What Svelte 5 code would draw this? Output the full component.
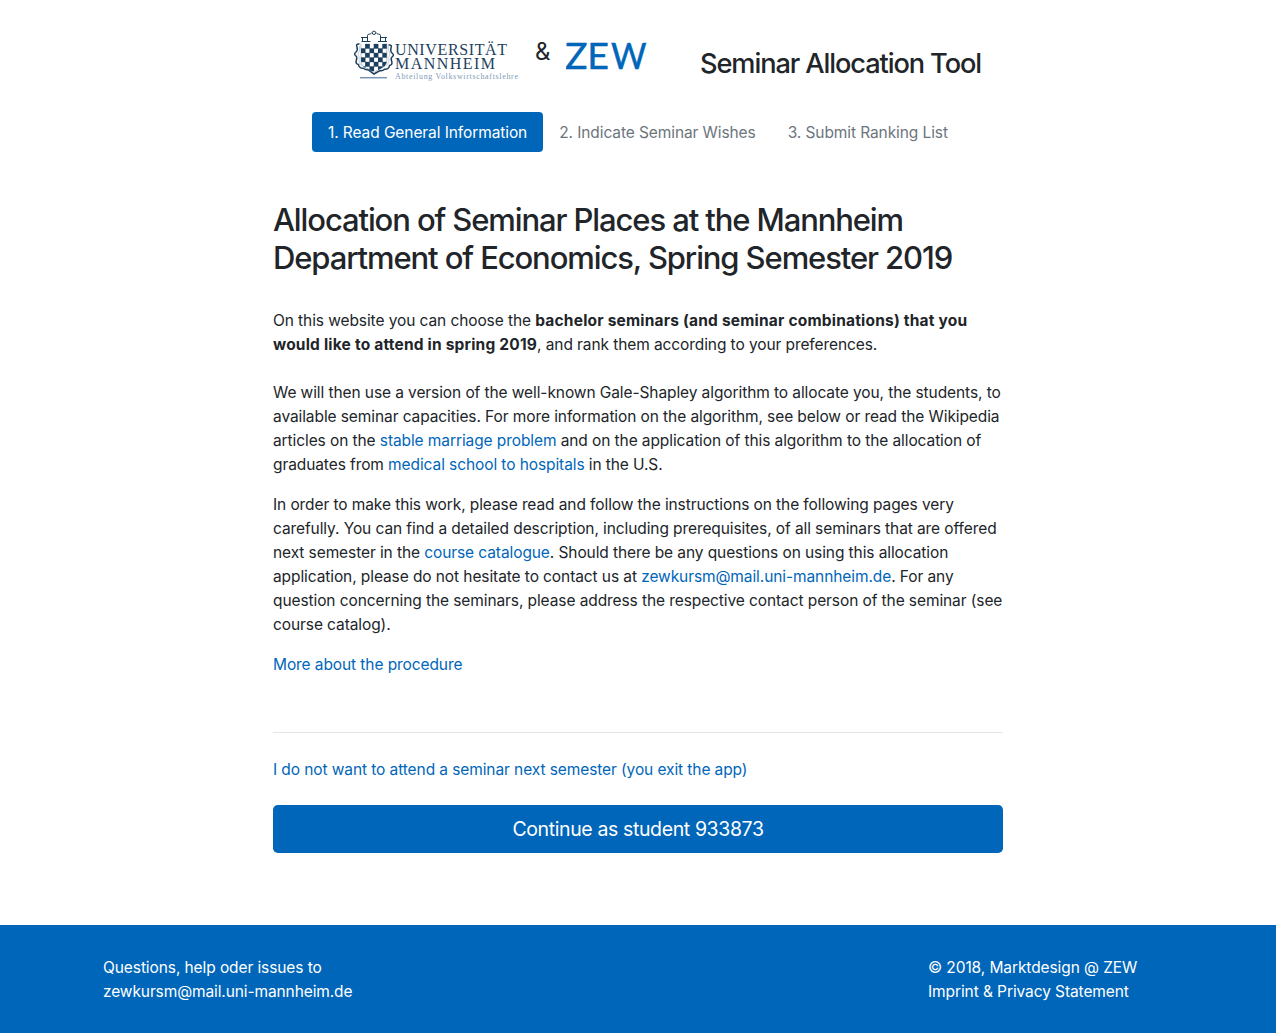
<script>
  const steps = ['1. Read General Information', '2. Indicate Seminar Wishes', '3. Submit Ranking List'];
  const checks = [];
  for (let row = 0; row < 6; row++)
    for (let col = 0; col < 6; col++)
      if ((row + col) % 2 === 1) checks.push({ x: 8 + col * 4.3, y: 14 + row * 4.5 });
</script>

<header>
  <svg class="uni" width="168" height="54" viewBox="0 0 168 54" aria-label="Universität Mannheim">
    <defs>
      <clipPath id="shield"><path d="M8 13.500h25.800v17q0 6-7 8.500l-5.900 3.500-5.900-3.500q-7-2.500-7-8.500z" /></clipPath>
    </defs>
    <g fill="none" stroke="#1d3f5e" stroke-width="1">
      <path d="M8.500 11.500h9M25 11.500h9M9.500 11.500v-4.500M8 7.500h7M14.500 11.500V5.500q0-1.500 2-1.300 1.500.1 2-1.500M32.500 11.500V7M34 7.500h-7M27.500 11.500V5.500q0-1.500-2-1.300-1.500.1-2-1.500" />
      <circle cx="21" cy="2.800" r="1.700" />
      <path d="M6.500 14Q2.500 13.500 4 17q1 3-1 5-2.500 2-.5 3.500 2 1.500 1 4-1.500 4.500 2 5 .5 4 5 3.800 2 1.800 4.500 1.300L21 44l6-3.400q2.500.5 4.500-1.300 4.500.2 5-3.800 3.500-.5 2-5-1-2.500 1-4 2-1.500-.5-3.500-2-2-1-5 1.500-3.500-2.500-3" stroke-width="1.500" />
      <path d="M6.500 16q1 4-1.500 8 2 3 1 7 1 3 3 5M35.500 16q-1 4 1.500 8-2 3-1 7-1 3-3 5" stroke-width=".6" stroke="#9fb2c4" />
      <path d="M8 13.500v17q0 6 7 8.500l5.900 3.500 5.900-3.500q7-2.500 7-8.500v-17" stroke-width=".5" stroke="#6f8aa5" />
    </g>
    <g clip-path="url(#shield)" fill="#1d3f5e">
      {#each checks as c}<rect x={c.x - 0.2} y={c.y - 0.2} width="4.7" height="4.9" />{/each}
    </g>
    <path d="M7 47.700h27" stroke="#7895b3" stroke-width="1.500" />
    <g class="serif" fill="#1d3f5e">
      <text x="42" y="24.500" font-size="16" textLength="112" lengthAdjust="spacing">UNIVERSITÄT</text>
      <text x="42" y="38.600" font-size="16" textLength="100" lengthAdjust="spacing">MANNHEIM</text>
      <text x="42" y="49" font-size="8" fill="#819cb8" textLength="123" lengthAdjust="spacing">Abteilung Volkswirtschaftslehre</text>
    </g>
  </svg>
  <span class="amp">&amp;</span>
  <svg class="zew" width="86" height="48" viewBox="0 0 86 48" aria-label="ZEW">
    <g fill="#0066ba" stroke="#0066ba" stroke-width=".5">
      <text x="-1" y="37.300" textLength="22.500" lengthAdjust="spacingAndGlyphs">Z</text>
      <text x="21.300" y="37.300">E</text>
      <text x="45" y="37.300" textLength="35.500" lengthAdjust="spacingAndGlyphs">W</text>
    </g>
  </svg>
  <h3>Seminar Allocation Tool</h3>
</header>

<nav>
  {#each steps as step, i}<a class:active={i === 0}>{step}</a>{/each}
</nav>

<main>
  <h2>Allocation of Seminar Places at the Mannheim<br />Department of Economics, Spring Semester 2019</h2>
  <p class="intro">On this website you can choose the <strong>bachelor seminars (and seminar combinations) that you<br />would like to attend in spring 2019</strong>, and rank them according to your preferences.</p>
  <p>We will then use a version of the well-known Gale-Shapley algorithm to allocate you, the students, to<br />available seminar capacities. For more information on the algorithm, see below or read the Wikipedia<br />articles on the <a>stable marriage problem</a> and on the application of this algorithm to the allocation of<br />graduates from <a>medical school to hospitals</a> in the U.S.</p>
  <p>In order to make this work, please read and follow the instructions on the following pages very<br />carefully. You can find a detailed description, including prerequisites, of all seminars that are offered<br />next semester in the <a>course catalogue</a>. Should there be any questions on using this allocation<br />application, please do not hesitate to contact us at <a>zewkursm@mail.uni-mannheim.de</a>. For any<br />question concerning the seminars, please address the respective contact person of the seminar (see<br />course catalog).</p>
  <p class="more"><a>More about the procedure</a></p>
  <hr />
  <p class="exit"><a>I do not want to attend a seminar next semester (you exit the app)</a></p>
  <button>Continue as student 933873</button>
</main>

<footer>
  <div>Questions, help oder issues to<br /><span class="mail">zewkursm@mail.uni-mannheim.de</span></div>
  <div class="legal">© 2018, Marktdesign @ ZEW<br />Imprint &amp; Privacy Statement</div>
</footer>

<style>
  :global(body) {
    margin: 0;
    background: #fff;
    color: #212529;
    font: 400 15.5px/24px Inter, 'Liberation Sans', sans-serif;
    letter-spacing: -0.09px;
  }
  header {
    display: flex;
    height: 112px;
    padding-left: 353px;
    box-sizing: border-box;
    align-items: flex-start;
    white-space: nowrap;
  }
  svg { display: block; flex: none; }
  .uni { margin-top: 30px; }
  .serif { font-family: 'Liberation Serif', serif; letter-spacing: 0; }
  .amp { width: 31px; margin: 36px 0 0 14px; font-size: 24px; line-height: 32px; }
  .zew { margin-top: 32px; font: 400 37.5px Lato, sans-serif; letter-spacing: 0; }
  h3 { margin: 47px 0 0 48px; font-size: 27.2px; line-height: 34px; font-weight: 500; letter-spacing: -1.1px; }
  nav { display: flex; height: 40px; padding-left: 312px; box-sizing: border-box; white-space: nowrap; }
  nav a { padding: 9px 16px 7px; color: #6c757d; border-radius: 4px; }
  nav a.active { background: #0066ba; color: #fff; }
  main { width: 730px; margin: 49px auto 0; white-space: nowrap; }
  h2 { margin: 0 0 31px; font-size: 31px; line-height: 38.4px; font-weight: 500; letter-spacing: -1.11px; }
  p { margin: 0 0 16px; }
  .intro { margin-bottom: 24px; }
  strong { font-weight: 700; letter-spacing: 0.2px; }
  main a { color: #0066ba; }
  .more { margin-bottom: 55px; }
  hr { margin: 0 0 25px; border: 0; border-top: 1px solid #e5e5e5; }
  .exit { margin-bottom: 23px; }
  button {
    display: block;
    width: 100%;
    height: 48px;
    padding: 0;
    border: 0;
    border-radius: 4.800px;
    background: #0066ba;
    color: #fff;
    font: 400 19.5px/30px Inter, sans-serif;
    letter-spacing: -0.38px;
  }
  footer {
    display: flex;
    height: 108px;
    margin-top: 72px;
    padding: 31px 0 0 103px;
    box-sizing: border-box;
    background: #0066ba;
    color: #fff;
    white-space: nowrap;
  }
  .mail { letter-spacing: -0.11px; }
  .legal { margin-left: auto; width: 348px; }
</style>
